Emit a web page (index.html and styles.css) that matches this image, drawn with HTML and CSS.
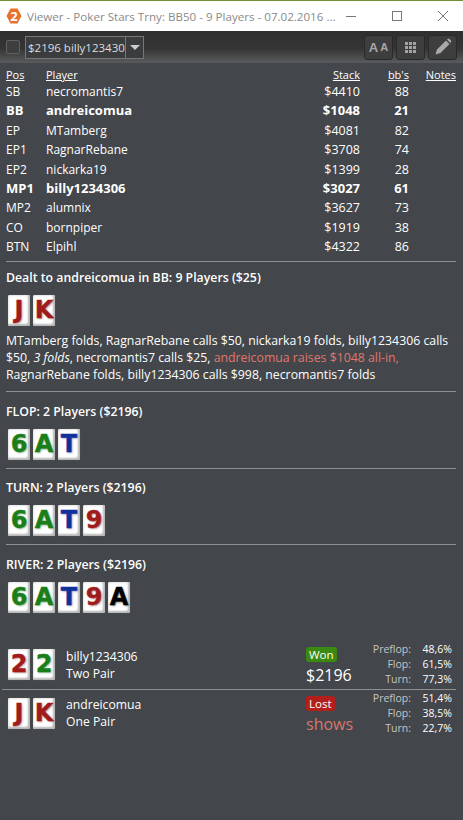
FILE: index.html
```html
<!DOCTYPE html>
<html lang="en">
<head>
  <meta charset="UTF-8" />
  <meta name="viewport" content="width=device-width, initial-scale=1.0" />
  <title>Viewer</title>
  <link rel="stylesheet" href="styles.css">
</head>
<body>

  <div class="titlebar">
    <svg class="app-icon" width="16" height="16" viewBox="0 0 16 16">
      <polygon points="4.5,0.5 11.5,0.5 15.5,8 11.5,15.5 4.5,15.5 0.5,8" fill="#e8702a" />
      <text x="8" y="12.5" text-anchor="middle" class="app-num">2</text>
    </svg>
    <span class="title-text">Viewer - Poker Stars Trny: BB50 - 9 Players - 07.02.2016 ...</span>
    <div class="win-buttons">
      <svg width="12" height="12" viewBox="0 0 12 12"><path d="M1 6.5H11" stroke="#777" fill="none" /></svg>
      <svg width="12" height="12" viewBox="0 0 12 12"><rect x="1.5" y="1.5" width="9" height="9" stroke="#777" fill="none" /></svg>
      <svg width="12" height="12" viewBox="0 0 12 12"><path d="M1 1L11 11M11 1L1 11" stroke="#777" fill="none" /></svg>
    </div>
  </div>

  <div class="toolbar">
    <span class="check"></span>
    <div class="combo">
      <span class="combo-text">$2196 billy1234306</span>
      <span class="combo-arrow"></span>
    </div>
    <div class="tool-buttons">
      <button class="tool-btn"><span class="aa-big">A</span><span class="aa-small">A</span></button>
      <button class="tool-btn">
        <svg width="13" height="13" viewBox="0 0 13 13" fill="#a3a3a3">
          <rect x="1" y="1" width="3" height="3" /><rect x="5" y="1" width="3" height="3" /><rect x="9" y="1" width="3" height="3" />
          <rect x="1" y="5" width="3" height="3" /><rect x="5" y="5" width="3" height="3" /><rect x="9" y="5" width="3" height="3" />
          <rect x="1" y="9" width="3" height="3" /><rect x="5" y="9" width="3" height="3" /><rect x="9" y="9" width="3" height="3" />
        </svg>
      </button>
      <button class="tool-btn">
        <svg width="18" height="18" viewBox="0 0 18 18" fill="#a8a8a8">
          <path d="M1.5 16.5L3 11.5L12 2.5L15.5 6L6.5 15Z" />
          <path d="M13 1.5L14 0.8Q14.8 0.4 15.5 1L17 2.5Q17.5 3.3 17 4L16.3 5Z" />
        </svg>
      </button>
    </div>
  </div>

  <div class="content">
    <table class="players">
      <thead>
        <tr>
          <th class="col-pos">Pos</th>
          <th class="col-player">Player</th>
          <th class="num col-stack">Stack</th>
          <th class="num col-bb">bb's</th>
          <th class="num col-notes">Notes</th>
        </tr>
      </thead>
      <tbody>
        <tr><td>SB</td><td>necromantis7</td><td class="num">$4410</td><td class="num">88</td><td></td></tr>
        <tr class="hero"><td>BB</td><td>andreicomua</td><td class="num">$1048</td><td class="num">21</td><td></td></tr>
        <tr><td>EP</td><td>MTamberg</td><td class="num">$4081</td><td class="num">82</td><td></td></tr>
        <tr><td>EP1</td><td>RagnarRebane</td><td class="num">$3708</td><td class="num">74</td><td></td></tr>
        <tr><td>EP2</td><td>nickarka19</td><td class="num">$1399</td><td class="num">28</td><td></td></tr>
        <tr class="hero"><td>MP1</td><td>billy1234306</td><td class="num">$3027</td><td class="num">61</td><td></td></tr>
        <tr><td>MP2</td><td>alumnix</td><td class="num">$3627</td><td class="num">73</td><td></td></tr>
        <tr><td>CO</td><td>bornpiper</td><td class="num">$1919</td><td class="num">38</td><td></td></tr>
        <tr><td>BTN</td><td>Elpihl</td><td class="num">$4322</td><td class="num">86</td><td></td></tr>
      </tbody>
    </table>

    <section class="street street-deal">
      <h2>Dealt to andreicomua in BB: 9 Players ($25)</h2>
      <div class="cards">
        <span class="card red">J</span><span class="card red">K</span>
      </div>
      <p class="actions">MTamberg folds, RagnarRebane calls $50, nickarka19 folds, billy1234306 calls $50, <em>3 folds</em>, necromantis7 calls $25, <span class="raise">andreicomua raises $1048 all-in,</span> RagnarRebane folds, billy1234306 calls $998, necromantis7 folds</p>
    </section>

    <section class="street">
      <h2>FLOP: 2 Players ($2196)</h2>
      <div class="cards">
        <span class="card green">6</span><span class="card green">A</span><span class="card blue">T</span>
      </div>
    </section>

    <section class="street">
      <h2>TURN: 2 Players ($2196)</h2>
      <div class="cards">
        <span class="card green">6</span><span class="card green">A</span><span class="card blue">T</span><span class="card red">9</span>
      </div>
    </section>

    <section class="street">
      <h2>RIVER: 2 Players ($2196)</h2>
      <div class="cards">
        <span class="card green">6</span><span class="card green">A</span><span class="card blue">T</span><span class="card red">9</span><span class="card black">A</span>
      </div>
    </section>

    <div class="results">
      <div class="result">
        <div class="cards">
          <span class="card red">2</span><span class="card green">2</span>
        </div>
        <div class="who">
          <div>billy1234306</div>
          <div>Two Pair</div>
        </div>
        <div class="outcome">
          <span class="badge won">Won</span>
          <span class="amount">$2196</span>
        </div>
        <div class="equity">
          <span class="eq-label">Preflop:</span><span>48,6%</span>
          <span class="eq-label">Flop:</span><span>61,5%</span>
          <span class="eq-label">Turn:</span><span>77,3%</span>
        </div>
      </div>
      <div class="result">
        <div class="cards">
          <span class="card red">J</span><span class="card red">K</span>
        </div>
        <div class="who">
          <div>andreicomua</div>
          <div>One Pair</div>
        </div>
        <div class="outcome">
          <span class="badge lost">Lost</span>
          <span class="amount shows">shows</span>
        </div>
        <div class="equity">
          <span class="eq-label">Preflop:</span><span>51,4%</span>
          <span class="eq-label">Flop:</span><span>38,5%</span>
          <span class="eq-label">Turn:</span><span>22,7%</span>
        </div>
      </div>
    </div>
  </div>

</body>
</html>
```

FILE: styles.css
```css
body {
  margin: 0;
  height: 820px;
  overflow: hidden;
  font-family: "Open Sans", "Noto Sans", Arial, sans-serif;
  font-size: 12px;
  color: #fff;
  background-color: #43464a;
  display: flex;
  flex-direction: column;
}

.titlebar {
  height: 31px;
  flex: none;
  box-sizing: border-box;
  border-top: 1px solid #6f8f3a;
  background-color: #fff;
  display: flex;
  align-items: center;
  padding-left: 6px;
  gap: 5px;
}

.app-icon {
  flex: none;
}

.app-num {
  font-size: 13px;
  font-weight: bold;
  fill: #fff;
}

.title-text {
  font-size: 11.6px;
  color: #8a8a8a;
  white-space: nowrap;
}

.win-buttons {
  margin-left: auto;
  display: flex;
  gap: 34px;
  padding-right: 14px;
}

.toolbar {
  height: 32px;
  flex: none;
  background: linear-gradient(180deg, #2f2f2f 0%, #353535 55%, #5a5b5c 100%);
  display: flex;
  align-items: center;
  padding-left: 6px;
  padding-right: 6px;
  box-sizing: border-box;
}

.check {
  width: 12px;
  height: 12px;
  border: 1px solid #5f6163;
  border-radius: 2px;
  background-color: #3c3e40;
  margin-right: 5px;
}

.combo {
  width: 119px;
  height: 23px;
  box-sizing: border-box;
  border: 1px solid #777;
  background-color: #3a3c3e;
  display: flex;
}

.combo-text {
  width: 99px;
  overflow: hidden;
  white-space: nowrap;
  font-size: 11.5px;
  line-height: 21px;
  padding-left: 2px;
  color: #ddd;
  box-sizing: border-box;
}

.combo-arrow {
  flex: 1;
  border-left: 1px solid #777;
  position: relative;
}

.combo-arrow::after {
  content: "";
  position: absolute;
  left: 4px;
  top: 8px;
  border-left: 5px solid transparent;
  border-right: 5px solid transparent;
  border-top: 5px solid #ccc;
}

.tool-buttons {
  margin-left: auto;
  display: flex;
  gap: 3px;
}

.tool-btn {
  width: 29px;
  height: 25px;
  padding: 0;
  background-color: #3e3e3e;
  border: 1px solid #2a2a2a;
  border-radius: 3px;
  display: flex;
  align-items: center;
  justify-content: center;
  gap: 2px;
  font-family: "Liberation Sans", Arial, sans-serif;
  font-weight: bold;
  color: #a8a8a8;
}

.aa-big { font-size: 13px; }
.aa-small { font-size: 11px; }

.content {
  flex: 1;
  padding: 4px 7px 0 6px;
  min-height: 0;
}

.players {
  width: 100%;
  border-collapse: collapse;
  table-layout: fixed;
  font-size: 12px;
  line-height: 19.4px;
}

.players th {
  font-weight: normal;
  text-align: left;
  text-decoration: underline;
  font-size: 11px;
  padding: 0;
  height: 15px;
  line-height: 15px;
}

.players td {
  padding: 0;
  white-space: nowrap;
}

.col-pos { width: 40px; }
.col-stack { width: 108px; }
.col-bb { width: 49px; }
.col-notes { width: 47px; }

.players th.num,
.players td.num {
  text-align: right;
}

.players td.num { font-size: 12.5px; }

.players .hero td {
  font-weight: bold;
  font-size: 13px;
}

.street {
  border-top: 1px solid #8e8f91;
  padding-top: 10.9px;
  padding-bottom: 8px;
}

.street-deal {
  margin-top: 4px;
  padding-top: 7px;
  padding-bottom: 8px;
}

.street h2 {
  margin: 0;
  font-size: 12.3px;
  font-weight: 600;
  line-height: 18px;
}

.street .cards {
  margin-top: 8px;
  padding-left: 2px;
}

.cards {
  display: flex;
  gap: 3px;
}

.card {
  width: 22px;
  height: 31px;
  box-sizing: border-box;
  background-color: #fff;
  border-radius: 2px;
  box-shadow: inset -2px -2px 2px #b5b5b5, inset 1px 1px 2px #e4e4e4, 0 0 1px #777;
  font-family: "DejaVu Sans", sans-serif;
  font-weight: bold;
  font-size: 24px;
  line-height: 31px;
  text-align: center;
  overflow: hidden;
  -webkit-text-stroke: 0.4px currentColor;
}

.card.red { color: #a01c1c; text-shadow: 1px 1px 2px #b99; }
.card.green { color: #1a7f1a; text-shadow: 1px 1px 2px #9b9; }
.card.blue { color: #10309c; text-shadow: 1px 1px 2px #99b; }
.card.black { color: #000; text-shadow: 1px 1px 2px #888; }

.actions {
  margin: 6px 0 0;
  font-size: 12.3px;
  line-height: 17px;
}

.raise { color: #e0766c; }

.results {
  margin-top: 19.5px;
}

.result {
  display: flex;
  align-items: center;
  height: 48px;
  box-sizing: border-box;
}

.result + .result {
  margin-left: -4px;
  padding-left: 4px;
  border-top: 1px solid #8e8f91;
}

.result .cards {
  width: 58px;
  flex: none;
  padding-left: 2px;
}

.who {
  width: 240px;
  flex: none;
  line-height: 17px;
  font-size: 12.2px;
}

.outcome {
  width: 66px;
  flex: none;
  align-self: flex-start;
  padding-top: 6px;
  display: flex;
  flex-direction: column;
  align-items: flex-start;
}

.badge {
  font-size: 11.5px;
  line-height: 15px;
  padding: 0 3px;
  border-radius: 3px;
}

.badge.won { background-color: #3a8a12; }
.badge.lost { background-color: #b3201c; }

.amount {
  font-size: 16px;
  line-height: 26px;
}

.amount.shows { color: #d8766c; }

.equity {
  flex: none;
  display: grid;
  grid-template-columns: 39px 30px;
  column-gap: 11px;
  font-size: 10.5px;
  line-height: 15px;
  text-align: right;
}

.eq-label { color: #c3c5c8; }
```
